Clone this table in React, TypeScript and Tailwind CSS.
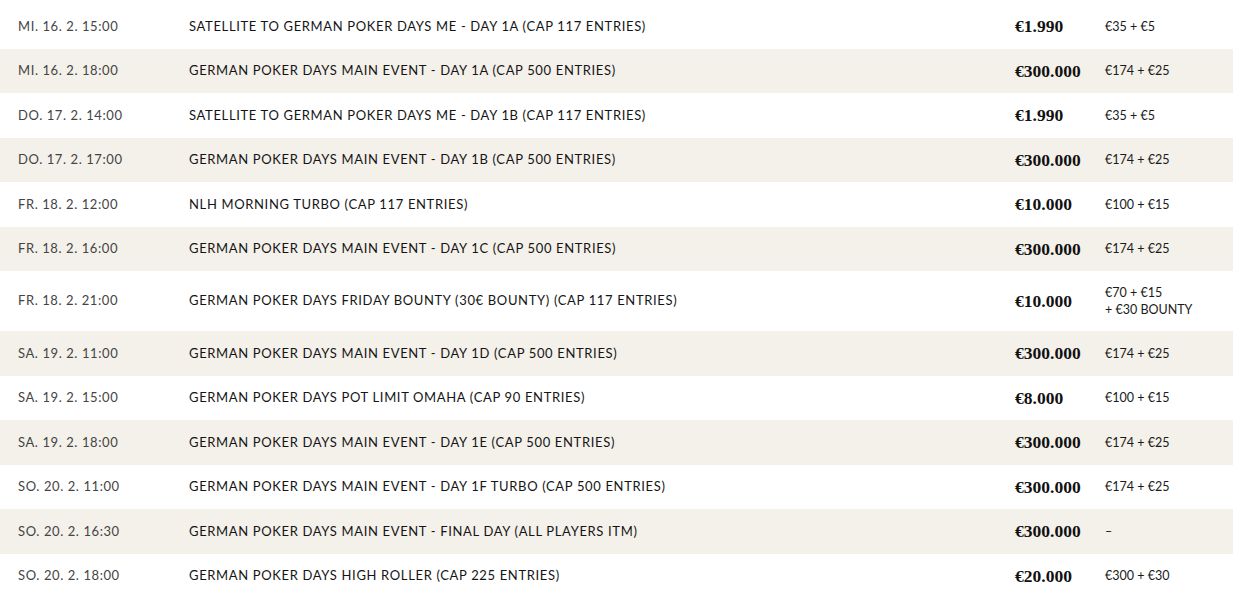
const events = [
  { date: 'MI. 16. 2. 15:00', title: 'SATELLITE TO GERMAN POKER DAYS ME - DAY 1A (CAP 117 ENTRIES)', prize: '€1.990', buyIn: ['€35 + €5'] },
  { date: 'MI. 16. 2. 18:00', title: 'GERMAN POKER DAYS MAIN EVENT - DAY 1A (CAP 500 ENTRIES)', prize: '€300.000', buyIn: ['€174 + €25'] },
  { date: 'DO. 17. 2. 14:00', title: 'SATELLITE TO GERMAN POKER DAYS ME - DAY 1B (CAP 117 ENTRIES)', prize: '€1.990', buyIn: ['€35 + €5'] },
  { date: 'DO. 17. 2. 17:00', title: 'GERMAN POKER DAYS MAIN EVENT - DAY 1B (CAP 500 ENTRIES)', prize: '€300.000', buyIn: ['€174 + €25'] },
  { date: 'FR. 18. 2. 12:00', title: 'NLH MORNING TURBO (CAP 117 ENTRIES)', prize: '€10.000', buyIn: ['€100 + €15'] },
  { date: 'FR. 18. 2. 16:00', title: 'GERMAN POKER DAYS MAIN EVENT - DAY 1C (CAP 500 ENTRIES)', prize: '€300.000', buyIn: ['€174 + €25'] },
  { date: 'FR. 18. 2. 21:00', title: 'GERMAN POKER DAYS FRIDAY BOUNTY (30€ BOUNTY) (CAP 117 ENTRIES)', prize: '€10.000', buyIn: ['€70 + €15', '+ €30 BOUNTY'] },
  { date: 'SA. 19. 2. 11:00', title: 'GERMAN POKER DAYS MAIN EVENT - DAY 1D (CAP 500 ENTRIES)', prize: '€300.000', buyIn: ['€174 + €25'] },
  { date: 'SA. 19. 2. 15:00', title: 'GERMAN POKER DAYS POT LIMIT OMAHA (CAP 90 ENTRIES)', prize: '€8.000', buyIn: ['€100 + €15'] },
  { date: 'SA. 19. 2. 18:00', title: 'GERMAN POKER DAYS MAIN EVENT - DAY 1E (CAP 500 ENTRIES)', prize: '€300.000', buyIn: ['€174 + €25'] },
  { date: 'SO. 20. 2. 11:00', title: 'GERMAN POKER DAYS MAIN EVENT - DAY 1F TURBO (CAP 500 ENTRIES)', prize: '€300.000', buyIn: ['€174 + €25'] },
  { date: 'SO. 20. 2. 16:30', title: 'GERMAN POKER DAYS MAIN EVENT - FINAL DAY (ALL PLAYERS ITM)', prize: '€300.000', buyIn: ['–'] },
  { date: 'SO. 20. 2. 18:00', title: 'GERMAN POKER DAYS HIGH ROLLER (CAP 225 ENTRIES)', prize: '€20.000', buyIn: ['€300 + €30'] },
];

export default function App() {
  return (
    <div className="w-[1233px] h-[603px] overflow-hidden bg-white pt-[4px] font-['Lato',sans-serif]">
      {events.map((ev, key) => (
        <div
          key={key}
          className={`flex items-center ${ev.buyIn.length > 1 ? 'h-[60px]' : 'h-[44.5px]'} ${
            key % 2 === 1 ? 'bg-[#f4f0ea]' : 'bg-white'
          }`}
        >
          <div className="w-[189px] pl-[18px] text-[13px] tracking-[0.045em] text-[#444]">{ev.date}</div>
          <div className="flex-1 text-[13px] tracking-[0.05em] text-[#151515]">{ev.title}</div>
          <div className="w-[90px] font-['Liberation_Serif',serif] text-[17.5px] font-bold text-[#111]">{ev.prize}</div>
          <div className="w-[128px] text-[12.5px] leading-[17px] text-[#1a1a1a]">
            {ev.buyIn.map((line, i) => (
              <div key={i}>{line}</div>
            ))}
          </div>
        </div>
      ))}
    </div>
  );
}
